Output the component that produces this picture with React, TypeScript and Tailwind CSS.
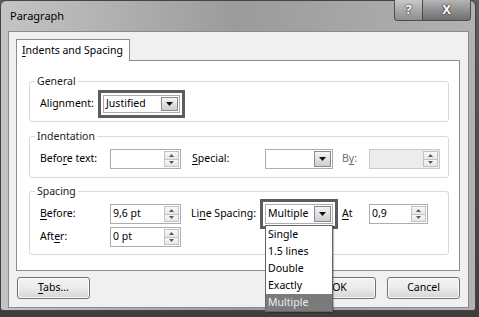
import React from "react";

const DownTri = () => (
  <svg width="7" height="4" viewBox="0 0 7 4">
    <path d="M0 0 L7 0 L3.5 4 Z" fill="#111" />
  </svg>
);

const SpinTri = ({ up }: { up?: boolean }) => (
  <svg width="5" height="3" viewBox="0 0 5 3">
    <path d={up ? "M0 3 L5 3 L2.5 0 Z" : "M0 0 L5 0 L2.5 3 Z"} fill="#5a5a5a" />
  </svg>
);

const DropBtn = () => (
  <div className="my-[1px] mr-[1px] flex w-[17px] items-center justify-center border border-[#8a8a8a] bg-linear-to-b from-[#f4f4f4] to-[#cdcdcd]">
    <DownTri />
  </div>
);

type SelectProps = {
  value?: string;
  w: string;
  h: string;
  children?: React.ReactNode;
};

const Select = ({ value, w, h, children }: SelectProps) => (
  <div className={`relative flex ${w} ${h} border border-[#abadb3] bg-white`}>
    <span className="flex flex-1 items-center pl-[2px] text-black">{value}</span>
    <DropBtn />
    {children}
  </div>
);

const Spin = ({ value, disabled }: { value?: string; disabled?: boolean }) => (
  <div
    className={`flex h-[20px] w-[71px] border ${
      disabled ? "border-[#c9c9c9] bg-[#ececec]" : "border-[#abadb3] bg-white"
    }`}
  >
    <span className="flex flex-1 items-center pl-[2px] text-black">{value}</span>
    <div className="my-[1px] mr-[1px] flex w-[15px] flex-col">
      <div className="flex flex-1 items-center justify-center border border-[#c3c3c3] bg-linear-to-b from-[#f8f8f8] to-[#e6e6e6]">
        <SpinTri up />
      </div>
      <div className="flex flex-1 items-center justify-center border border-t-0 border-[#c3c3c3] bg-linear-to-b from-[#f8f8f8] to-[#e6e6e6]">
        <SpinTri />
      </div>
    </div>
  </div>
);

// thick dark frame drawn round a control, without changing its place in the row
const Mark = ({ children }: { children: React.ReactNode }) => (
  <div className="-m-[5px] border-[3px] border-[#5c5c5c] bg-white p-[2px]">{children}</div>
);

const Group = ({
  title,
  className,
  children,
}: {
  title: string;
  className: string;
  children: React.ReactNode;
}) => (
  <div className={`relative ml-[12px] mr-[10px] rounded-[3px] border border-[#d5dadf] pl-[10px] pt-[12px] ${className}`}>
    <span className="absolute -top-[8px] left-[5px] bg-white px-[2px] leading-[14px] text-[#1a1a1a]">
      {title}
    </span>
    {children}
  </div>
);

const Btn = ({ children, className }: { children: React.ReactNode; className?: string }) => (
  <div
    className={`flex h-[22px] w-[73px] items-center justify-center rounded-[3px] border border-[#707070] bg-linear-to-b from-[#f3f3f3] via-[#ebebeb] to-[#d4d4d4] text-black shadow-[inset_0_0_0_1px_#fbfbfb] ${className ?? ""}`}
  >
    {children}
  </div>
);

const lineOptions = ["Single", "1.5 lines", "Double", "Exactly", "Multiple"];

export default function App() {
  return (
    <div className="h-[317px] w-[479px] overflow-hidden bg-linear-to-b from-[#5e5e5e] to-[#3e3e3e] font-['Noto_Sans',sans-serif] text-[10.5px]">
      <div className="relative h-[311px] w-[476px] rounded-t-[6px] rounded-b-[3px] border border-[#444] bg-linear-to-r from-[#c4c4c4] via-[#9b9b9b] to-[#b2b2b2]">
        {/* title bar */}
        <div className="flex h-[30px] items-center pl-[9px] text-[11px] text-black">Paragraph</div>

        <div className="absolute -top-[1px] right-[4px] flex h-[21px]">
          <div className="flex w-[29px] items-center justify-center rounded-bl-[4px] border border-t-0 border-[#4d4d4d] bg-linear-to-b from-[#c8c8c8] to-[#8e8e8e] text-[13px] font-bold text-white [text-shadow:0_0_2px_#222,0_0_1px_#222]">
            ?
          </div>
          <div className="flex w-[48px] items-center justify-center rounded-br-[4px] border border-l-0 border-t-0 border-[#4d4d4d] bg-linear-to-b from-[#b5b5b5] to-[#6f6f6f] text-[13px] font-bold text-white [text-shadow:0_0_2px_#222,0_0_1px_#222]">
            X
          </div>
        </div>

        {/* client area */}
        <div className="ml-[7px] mr-[6px] h-[277px] border border-[#8a8a8a] bg-[#f0f0f0] pl-[7px] pr-[8px] pt-[7px]">
          <div className="relative z-10 -mb-[1px] flex h-[22px] w-[114px] items-center border border-b-0 border-[#898c95] bg-white pl-[5px] text-black">
            <span>
              <span className="underline underline-offset-2">I</span>ndents and Spacing
            </span>
          </div>

          <div className="h-[211px] border border-[#898c95] bg-white pt-[20px]">
            <Group title="General" className="h-[41px] !pt-[13px]">
              <div className="flex h-[18px] items-center">
                <span className="w-[63px] text-black">Alignment:</span>
                <Mark>
                  <Select value="Justified" w="w-[77px]" h="h-[18px]" />
                </Mark>
              </div>
            </Group>

            <Group title="Indentation" className="mt-[14px] h-[42px]">
              <div className="flex h-[20px] items-center">
                <span className="w-[70px] text-black">
                  Befo<span className="underline underline-offset-2">r</span>e text:
                </span>
                <Spin />
                <span className="ml-[11px] w-[73px] text-black">
                  <span className="underline underline-offset-2">S</span>pecial:
                </span>
                <Select w="w-[68px]" h="h-[20px]" />
                <span className="ml-[9px] w-[27px] text-[#6e6e6e]">
                  B<span className="underline underline-offset-2">y</span>:
                </span>
                <Spin disabled />
              </div>
            </Group>

            <Group title="Spacing" className="mt-[13px] h-[64px]">
              <div className="flex h-[20px] items-center">
                <span className="w-[70px] text-black">
                  <span className="underline underline-offset-2">B</span>efore:
                </span>
                <Spin value="9,6 pt" />
                <span className="ml-[10px] w-[74px] text-black">
                  Li<span className="underline underline-offset-2">n</span>e Spacing:
                </span>
                <Mark>
                  <Select value="Multiple" w="w-[68px]" h="h-[20px]">
                    <div className="absolute left-[-1px] top-[20px] z-20 w-[68px] border border-[#646464] bg-white shadow-[1px_1px_1px_rgba(0,0,0,0.25)]">
                      {lineOptions.map((opt) => (
                        <div
                          key={opt}
                          className={`flex h-[17px] items-center pl-[2px] ${
                            opt === "Multiple" ? "bg-[#7b7b7b] text-[#ececec]" : "text-black"
                          }`}
                        >
                          {opt}
                        </div>
                      ))}
                    </div>
                  </Select>
                </Mark>
                <span className="ml-[9px] w-[27px] text-black">
                  <span className="underline underline-offset-2">A</span>t
                </span>
                <div className="w-[59px] overflow-hidden">
                  <div className="flex h-[20px] w-[59px] border border-[#abadb3] bg-white">
                    <span className="flex flex-1 items-center pl-[2px] text-black">0,9</span>
                    <div className="my-[1px] mr-[1px] flex w-[15px] flex-col">
                      <div className="flex flex-1 items-center justify-center border border-[#c3c3c3] bg-linear-to-b from-[#f8f8f8] to-[#e6e6e6]">
                        <SpinTri up />
                      </div>
                      <div className="flex flex-1 items-center justify-center border border-t-0 border-[#c3c3c3] bg-linear-to-b from-[#f8f8f8] to-[#e6e6e6]">
                        <SpinTri />
                      </div>
                    </div>
                  </div>
                </div>
              </div>
              <div className="mt-[3px] flex h-[20px] items-center">
                <span className="w-[70px] text-black">
                  Aft<span className="underline underline-offset-2">e</span>r:
                </span>
                <Spin value="0 pt" />
              </div>
            </Group>
          </div>

          <div className="mt-[6px] flex items-center pl-[1px]">
            <Btn>
              <span>
                <span className="underline underline-offset-2">T</span>abs...
              </span>
            </Btn>
            <div className="flex-1" />
            <Btn>OK</Btn>
            <Btn className="ml-[11px]">Cancel</Btn>
          </div>
        </div>
      </div>
    </div>
  );
}
